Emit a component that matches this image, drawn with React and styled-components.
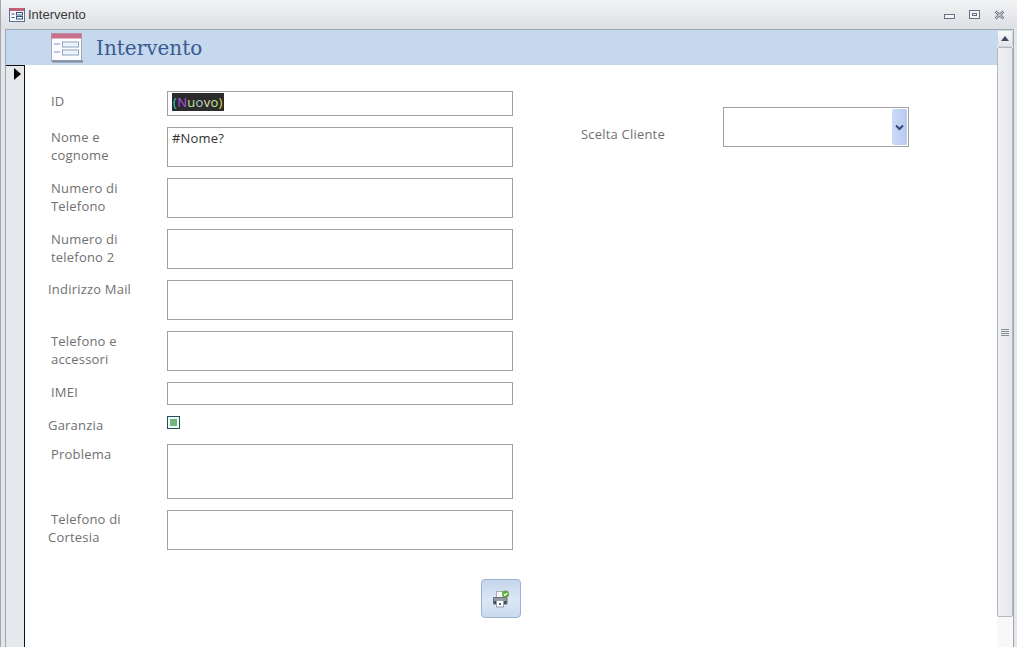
import React from "react";
import styled, { createGlobalStyle } from "styled-components";

const GlobalStyle = createGlobalStyle`
  html, body {
    margin: 0;
    padding: 0;
    overflow: hidden;
  }
  body {
    font-family: "Open Sans", "Liberation Sans", sans-serif;
  }
`;

const fields = [
  { label: ["ID"], height: 25, kind: "new" },
  { label: ["Nome e", "cognome"], height: 40, value: "#Nome?" },
  { label: ["Numero di", "Telefono"], height: 40 },
  { label: ["Numero di", "telefono 2"], height: 40 },
  { label: ["Indirizzo Mail"], height: 40, inset: 23, top: 0 },
  { label: ["Telefono e", "accessori"], height: 40 },
  { label: ["IMEI"], height: 23 },
  { label: ["Garanzia"], height: 13, kind: "check", inset: 23, top: 0 },
  { label: ["Problema"], height: 55 },
  { label: ["Telefono di", "Cortesia"], height: 40, top: 0, outdentLast: true },
];

const newMarkLetters = [
  ["(", "#35d0c8"],
  ["N", "#b050e0"],
  ["u", "#c8e0a0"],
  ["o", "#a8d8d0"],
  ["v", "#e0e0a0"],
  ["o", "#c0e8a0"],
  [")", "#e8d840"],
];

const FormIcon = () => (
  <svg width="32" height="30" viewBox="0 0 32 30">
    <rect x="0.5" y="0.5" width="30" height="27" fill="#fbfbfd" stroke="#a4abb8" />
    <rect x="0.500" y="0.500" width="30" height="5" fill="#c9718a" />
    <rect x="1" y="27.500" width="31" height="2" fill="#7f8ba0" />
    <path d="M3 11h6M3 19h6" stroke="#a9bad2" strokeWidth="1.500" />
    <rect x="11.500" y="9" width="16" height="5" fill="#eef3f9" stroke="#8ba2c2" />
    <rect x="11.500" y="17" width="16" height="5" fill="#eef3f9" stroke="#8ba2c2" />
  </svg>
);

const SmallFormIcon = () => (
  <svg width="16" height="16" viewBox="0 0 16 16">
    <rect x="0.5" y="1.5" width="15" height="13" fill="#f5f8fc" stroke="#5b6f92" />
    <rect x="1" y="1" width="14" height="3" fill="#c45f78" />
    <path d="M2.5 7h3M2.5 10.500h3" stroke="#33507f" />
    <rect x="7.500" y="5.500" width="6" height="2.500" fill="#fff" stroke="#33507f" />
    <rect x="7.500" y="9.500" width="6" height="2.500" fill="#fff" stroke="#33507f" />
  </svg>
);

const MinimizeIcon = () => (
  <svg width="11" height="10" viewBox="0 0 11 10">
    <rect x="0.500" y="4.500" width="10" height="4" fill="#f4f5f7" stroke="#667080" />
  </svg>
);

const RestoreIcon = () => (
  <svg width="11" height="10" viewBox="0 0 11 10">
    <rect x="0.500" y="0.500" width="10" height="8" fill="#f4f5f7" stroke="#667080" />
    <rect x="3.500" y="3.500" width="4" height="2" fill="#fff" stroke="#667080" />
  </svg>
);

const CloseIcon = () => (
  <svg width="11" height="10" viewBox="0 0 11 10">
    <path d="M1.500 1.500l8 7M9.500 1.500l-8 7" stroke="#667080" strokeWidth="2.600" fill="none" />
    <path d="M1.500 1.500l8 7M9.500 1.500l-8 7" stroke="#f0f2f4" strokeWidth="1" fill="none" />
  </svg>
);

const PrinterIcon = () => (
  <svg width="18" height="18" viewBox="0 0 18 18">
    <rect x="4.500" y="1.500" width="7" height="6" fill="#f7f7f7" stroke="#a6abb4" />
    <path d="M1.500 7.500h13.500v6.500H1.500z" fill="#969aa2" stroke="#6a6f78" />
    <rect x="2" y="11" width="12.500" height="3" fill="#474c55" />
    <rect x="4.500" y="10.500" width="7" height="6.500" fill="#fff" stroke="#9a9fa8" />
    <rect x="7" y="13" width="2" height="2" fill="#4f6fb5" />
    <circle cx="13.500" cy="4" r="3.500" fill="#58a83c" />
    <path d="M11.800 4l1.300 1.400 2.200-2.600" fill="none" stroke="#fff" strokeWidth="1.200" />
  </svg>
);

export default function App() {
  return (
    <Window>
      <GlobalStyle />
      <TitleBar>
        <TitleLeft>
          <SmallFormIcon />
          <TitleText>Intervento</TitleText>
        </TitleLeft>
        <WindowButtons>
          <MinimizeIcon />
          <RestoreIcon />
          <CloseIcon />
        </WindowButtons>
      </TitleBar>
      <Frame>
        <Content>
          <FormHeader>
            <FormIcon />
            <HeaderTitle>Intervento</HeaderTitle>
          </FormHeader>
          <FormArea>
            <RecordSelector>
              <Arrow />
            </RecordSelector>
            <Detail>
              <FieldColumn>
                {fields.map((field) => (
                  <Row key={field.label[0]} $spaced={field.kind === "check"}>
                    <Label $inset={field.inset} $top={field.top} $height={field.height}>
                      {field.label.map((line, i) => (
                        <LabelLine key={line} $outdent={field.outdentLast && i === 1}>
                          {line}
                        </LabelLine>
                      ))}
                    </Label>
                    {field.kind === "check" ? (
                      <CheckBox>
                        <CheckMark />
                      </CheckBox>
                    ) : (
                      <Input $height={field.height}>
                        {field.kind === "new" && (
                          <NewMark>
                            {newMarkLetters.map(([letter, color], i) => (
                              <NewLetter key={i} $color={color}>
                                {letter}
                              </NewLetter>
                            ))}
                          </NewMark>
                        )}
                        {field.value}
                      </Input>
                    )}
                  </Row>
                ))}
                <PrintRow>
                  <PrintButton>
                    <PrinterIcon />
                  </PrintButton>
                </PrintRow>
              </FieldColumn>
              <ClientPicker>
                <ClientLabel>Scelta Cliente</ClientLabel>
                <Combo>
                  <ComboButton>
                    <svg width="9" height="7" viewBox="0 0 9 7">
                      <path d="M1 1.500l3.500 3.500L8 1.500" fill="none" stroke="#2f4a78" strokeWidth="2" />
                    </svg>
                  </ComboButton>
                </Combo>
              </ClientPicker>
            </Detail>
          </FormArea>
        </Content>
        <ScrollBar>
          <ScrollArrow>
            <ArrowUp />
          </ScrollArrow>
          <ScrollThumb>
            <Grip />
          </ScrollThumb>
        </ScrollBar>
      </Frame>
    </Window>
  );
}

const Window = styled.div`
  width: 1017px;
  height: 647px;
  box-sizing: border-box;
  display: flex;
  flex-direction: column;
  overflow: hidden;
  border-left: 1px solid #a4a8ae;
  background: #e3e6ea;
`;

const TitleBar = styled.div`
  height: 29px;
  flex: none;
  display: flex;
  align-items: center;
  justify-content: space-between;
  padding: 0 12px 0 8px;
  background: linear-gradient(#f2f3f5, #dcdfe3);
`;

const TitleLeft = styled.div`
  display: flex;
  align-items: center;
  gap: 3px;
`;

const TitleText = styled.span`
  font-family: "Liberation Sans", sans-serif;
  font-size: 13px;
  color: #3a3a3a;
`;

const WindowButtons = styled.div`
  display: flex;
  align-items: center;
  gap: 14px;
`;

const Frame = styled.div`
  flex: 1;
  min-height: 0;
  margin: 0 3px 0 4px;
  display: flex;
  border: 1px solid #9ea6b1;
  border-bottom: 0;
  background: #fff;
`;

const Content = styled.div`
  flex: 1;
  min-width: 0;
  display: flex;
  flex-direction: column;
`;

const FormHeader = styled.div`
  height: 35px;
  flex: none;
  display: flex;
  align-items: center;
  gap: 13px;
  padding-left: 45px;
  background: #c5d8ee;
`;

const HeaderTitle = styled.h1`
  margin: 0;
  font-family: "DejaVu Serif", "Liberation Serif", serif;
  font-size: 20px;
  font-weight: 400;
  color: #3a5a90;
`;

const FormArea = styled.div`
  flex: 1;
  display: flex;
  min-height: 0;
`;

const RecordSelector = styled.div`
  width: 18px;
  flex: none;
  border-right: 1px solid #111;
  border-top: 1px solid #111;
  background: #e6e9ec;
  display: flex;
  justify-content: center;
  align-items: flex-start;
  padding-top: 2px;
`;

const Arrow = styled.div`
  width: 0;
  height: 0;
  margin-left: 4px;
  border-left: 7px solid #000;
  border-top: 6px solid transparent;
  border-bottom: 6px solid transparent;
`;

const Detail = styled.div`
  flex: 1;
  display: flex;
  align-items: flex-start;
  padding-top: 26px;
`;

const FieldColumn = styled.div`
  width: 496px;
  flex: none;
  display: flex;
  flex-direction: column;
  gap: 11px;
`;

const Row = styled.div`
  display: flex;
  align-items: flex-start;
  margin-bottom: ${(p) => (p.$spaced ? 4 : 0)}px;
`;

const Label = styled.div`
  width: 142px;
  flex: none;
  padding: ${(p) => p.$top ?? 1}px 0 0 ${(p) => p.$inset ?? 26}px;
  box-sizing: border-box;
  font-size: 13px;
  letter-spacing: 0.2px;
  line-height: 18px;
  color: #707070;
  height: ${(p) => p.$height}px;
`;

const LabelLine = styled.div`
  margin-left: ${(p) => (p.$outdent ? -3 : 0)}px;
`;

const Input = styled.div`
  width: 346px;
  height: ${(p) => p.$height}px;
  box-sizing: border-box;
  border: 1px solid #a0a0a0;
  padding: 1px 4px;
  font-size: 13px;
  letter-spacing: 0.2px;
  line-height: 18px;
  color: #333;
  background: #fff;
`;

const NewMark = styled.span`
  display: inline-block;
  padding: 0 1px;
  background: #2b2b2b;
  letter-spacing: 0.3px;
`;

const NewLetter = styled.span`
  color: ${(p) => p.$color};
`;

const CheckBox = styled.div`
  width: 13px;
  height: 13px;
  box-sizing: border-box;
  border: 1px solid #24505c;
  background: #f2fbf6;
  padding: 2px;
`;

const CheckMark = styled.div`
  width: 100%;
  height: 100%;
  background: #6fb77c;
`;

const PrintRow = styled.div`
  display: flex;
  justify-content: flex-end;
  margin-top: 18px;
`;

const PrintButton = styled.button`
  width: 40px;
  height: 39px;
  padding: 0;
  display: flex;
  align-items: center;
  justify-content: center;
  border: 1px solid #9db2cf;
  border-radius: 4px;
  background: linear-gradient(#c5d6ec, #dce7f5 55%, #c9daf0);
`;

const ClientPicker = styled.div`
  margin: 16px 0 0 60px;
  display: flex;
  align-items: flex-start;
`;

const ClientLabel = styled.span`
  width: 142px;
  padding-top: 18px;
  font-size: 13px;
  letter-spacing: 0.2px;
  line-height: 18px;
  color: #707070;
`;

const Combo = styled.div`
  width: 186px;
  height: 40px;
  box-sizing: border-box;
  border: 1px solid #a0a0a0;
  display: flex;
  justify-content: flex-end;
  padding: 1px;
  background: #fff;
`;

const ComboButton = styled.div`
  width: 15px;
  display: flex;
  align-items: center;
  justify-content: center;
  border-radius: 2px;
  background: linear-gradient(90deg, #cbdaf6, #b9caf0);
`;

const ScrollBar = styled.div`
  width: 16px;
  flex: none;
  display: flex;
  flex-direction: column;
  background: #f8f8f9;
`;

const ScrollArrow = styled.div`
  height: 17px;
  flex: none;
  box-sizing: border-box;
  display: flex;
  align-items: center;
  justify-content: center;
  background: linear-gradient(#f8f9fa, #e4e6e9);
  border: 1px solid #d0d3d8;
  border-radius: 2px;
`;

const ArrowUp = styled.div`
  width: 0;
  height: 0;
  border-left: 4px solid transparent;
  border-right: 4px solid transparent;
  border-bottom: 5px solid #3f4a5c;
`;

const ScrollThumb = styled.div`
  height: 570px;
  flex: none;
  display: flex;
  align-items: center;
  justify-content: center;
  box-sizing: border-box;
  border: 1px solid #b4b7bc;
  border-radius: 2px;
  background: linear-gradient(90deg, #f0f1f3, #e6e7ea);
`;

const Grip = styled.div`
  width: 8px;
  height: 7px;
  background: repeating-linear-gradient(#8a8d92 0 1px, transparent 1px 2px);
`;
